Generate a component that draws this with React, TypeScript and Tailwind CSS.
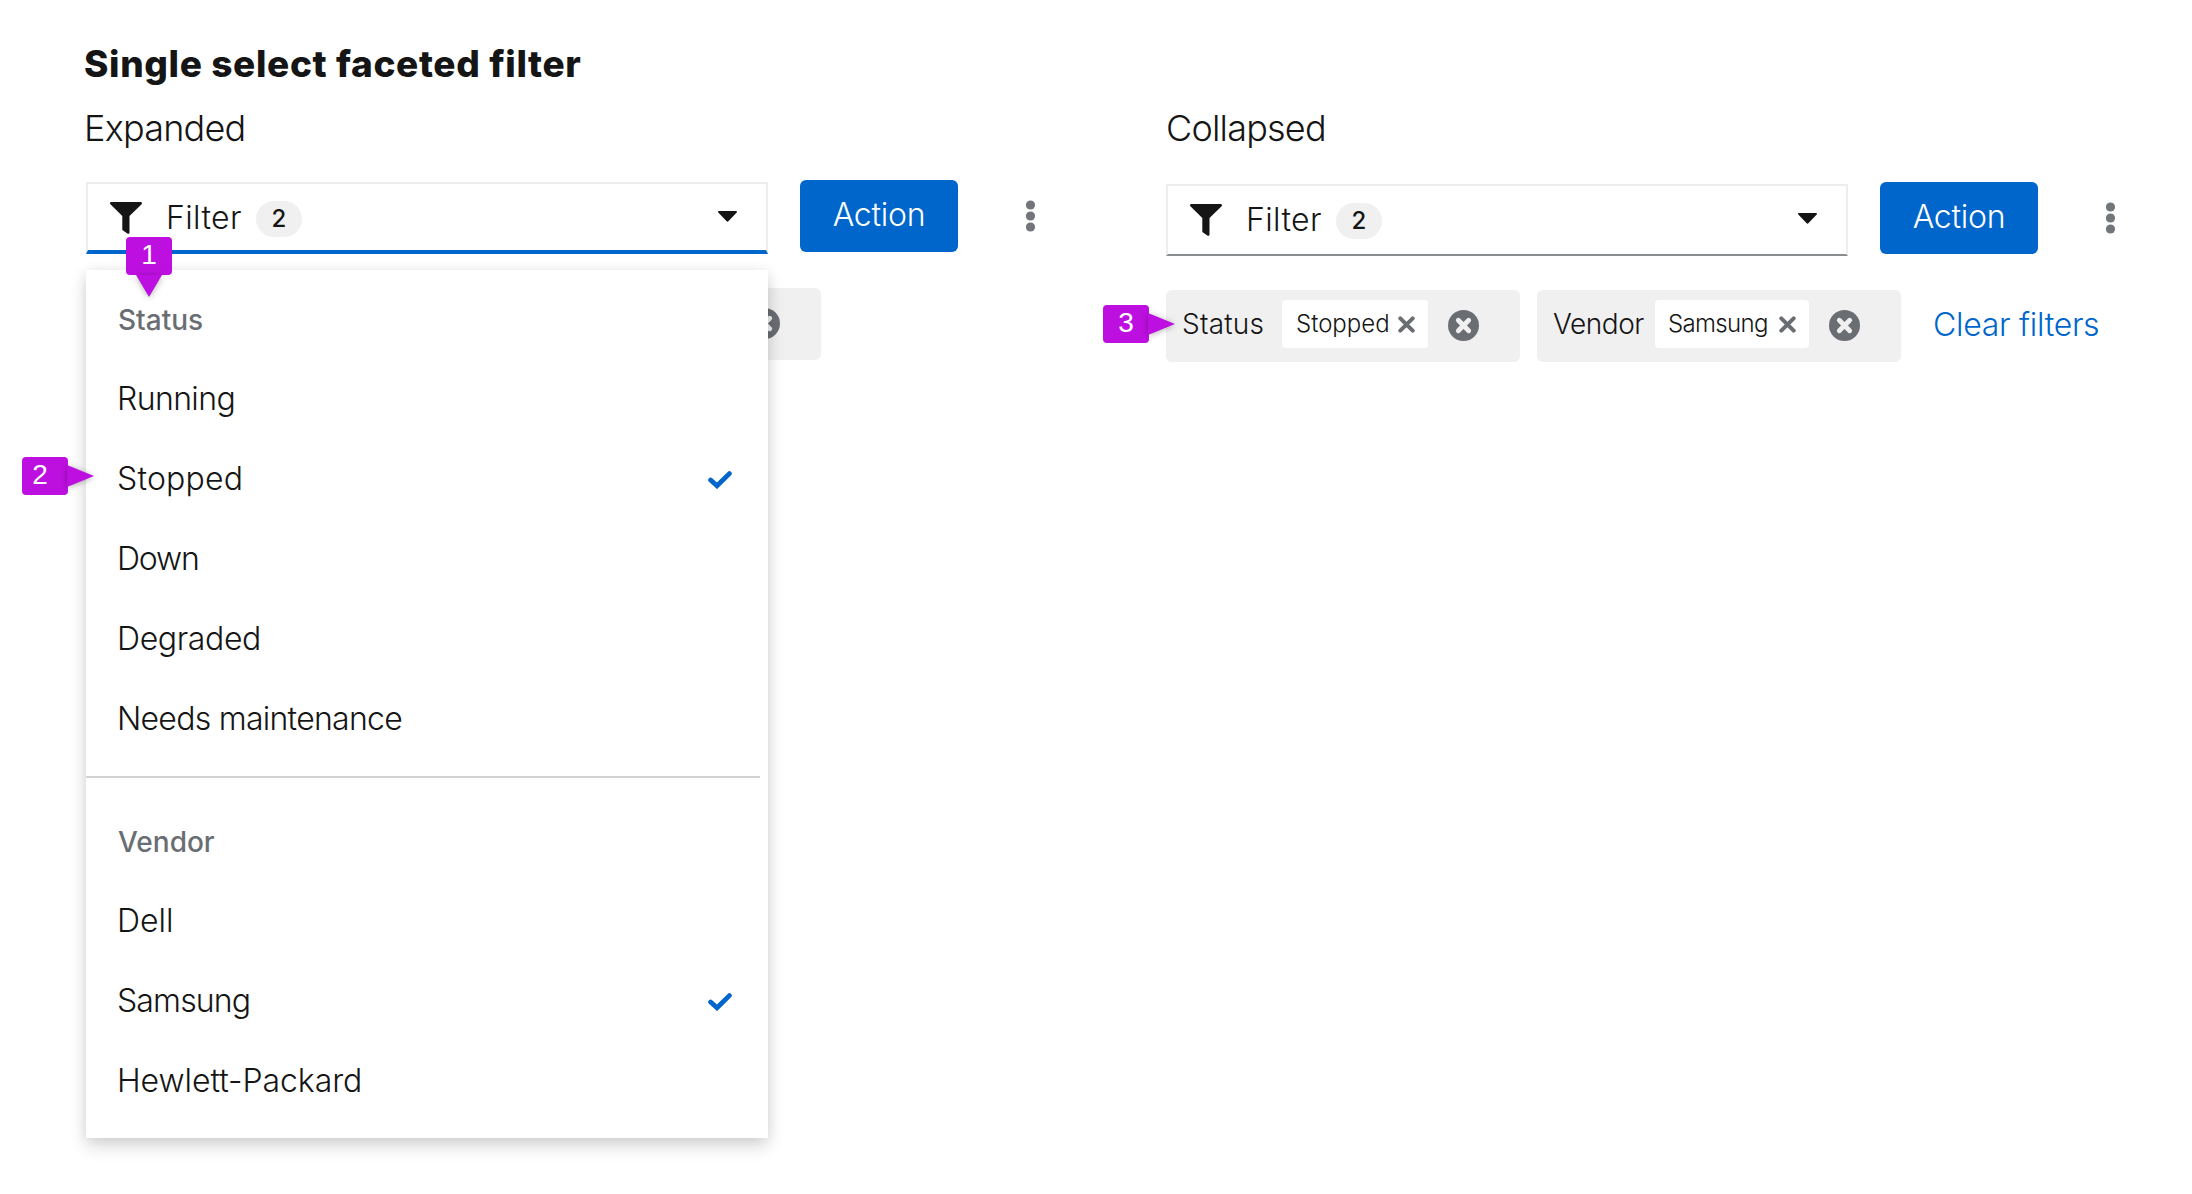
import React from "react";

const Funnel = () => (
  <svg className="h-8 w-8 shrink-0" viewBox="0 0 32 32" fill="#151515">
    <path d="M1.500 0h29c1.400 0 1.900 1.400 1.100 2.300L19.500 13.900V30.400c0 1.200-1.200 1.600-2.100 1L13 28.600a1.600 1.600 0 0 1-.7-1.300V13.900L.4 2.300C-.5 1.400 .1 0 1.500 0z" />
  </svg>
);
const Caret = () => (
  <svg className="h-[11px] w-[19px] shrink-0" viewBox="0 0 19 11" fill="#151515">
    <path d="M1 0h17c.9 0 1.300 1 .7 1.600L10.600 10.100a1.500 1.500 0 0 1-2.200 0L.3 1.600C-.3 1 .1 0 1 0z" />
  </svg>
);
const Kebab = () => (
  <svg className="h-8 w-[10px]" viewBox="0 0 10 32" fill="#72767b">
    <circle cx="4.5" cy="5" r="4.600" />
    <circle cx="4.5" cy="16" r="4.600" />
    <circle cx="4.5" cy="27" r="4.600" />
  </svg>
);
const Check = () => (
  <svg className="h-[18px] w-6" viewBox="0 0 24 18" fill="none" stroke="#06c" strokeWidth="4.800" strokeLinecap="round">
    <path d="M2.600 9L9 14.800L21.400 2.600" />
  </svg>
);
const Times = () => (
  <svg className="h-[17px] w-[17px] shrink-0" viewBox="0 0 17 17" fill="none" stroke="#6a6e73" strokeWidth="4" strokeLinecap="round">
    <path d="M2.300 2.300L14.700 14.700M14.700 2.300L2.300 14.700" />
  </svg>
);
const TimesCircle = () => (
  <svg className="h-[31px] w-[31px] shrink-0" viewBox="0 0 31 31">
    <circle cx="15.500" cy="15.500" r="15.500" fill="#6a6e73" />
    <path d="M10.300 10.300L20.700 20.700M20.700 10.300L10.300 20.700" stroke="#f0f0f0" strokeWidth="4.800" strokeLinecap="round" />
  </svg>
);

function Toolbar({ open }: { open?: boolean }) {
  return (
    <div className="flex">
      <button
        className={
          open
            ? "mt-0.5 flex h-[72px] w-[682px] items-center border-2 border-b-4 border-[#ededed] border-b-[#06c] pt-px pr-[29px] pl-[22px]"
            : "mt-0.5 flex h-[72px] w-[682px] items-center border-2 border-[#ededed] border-b-[#8a8d90] pr-[29px] pb-px pl-[22px]"
        }
      >
        <Funnel />
        <span className="ml-6 w-[90px] text-left text-[32px] leading-[40px] font-light tracking-[0.011em]">Filter</span>
        <span className="mt-0.5 flex h-9 w-[46px] items-center justify-center rounded-full bg-[#f0f0f0] text-2xl font-medium">2</span>
        <span className="mb-0.5 ml-auto">
          <Caret />
        </span>
      </button>
      <button className="ml-8 h-[72px] w-[158px] rounded-md bg-[#06c] pb-[3px] text-[32px] font-light tracking-[-0.008em] text-white">
        Action
      </button>
      <div className="ml-[68px] flex h-[72px] items-center">
        <Kebab />
      </div>
    </div>
  );
}

type Option = { label: string; tracking: string; selected?: boolean };

const statusOptions: Option[] = [
  { label: "Running", tracking: "tracking-[-0.019em]" },
  { label: "Stopped", tracking: "tracking-[0.006em]", selected: true },
  { label: "Down", tracking: "tracking-[-0.036em]" },
  { label: "Degraded", tracking: "tracking-[-0.012em]" },
  { label: "Needs maintenance", tracking: "tracking-[-0.023em]" },
];
const vendorOptions: Option[] = [
  { label: "Dell", tracking: "tracking-[0em]" },
  { label: "Samsung", tracking: "tracking-[-0.027em]", selected: true },
  { label: "Hewlett-Packard", tracking: "tracking-[-0.002em]" },
];

function Group({ title, options }: { title: string; options: Option[] }) {
  return (
    <div>
      <div className="h-20 pl-8 text-[28px] leading-[80px] font-medium text-[#6a6e73]">{title}</div>
      {options.map((o) => (
        <div key={o.label} className="flex h-20 items-center justify-between pr-9 pb-[3px] pl-[31px] text-[32px] font-light">
          <span className={o.tracking}>{o.label}</span>
          {o.selected && (
            <span className="pt-0.5">
              <Check />
            </span>
          )}
        </div>
      ))}
    </div>
  );
}

function Pointer({ n, className }: { n: string; className: string }) {
  return (
    <div className={className}>
      <div className="h-[38px] w-[46px] rounded bg-[#bd10e0] text-center font-['Liberation_Sans',sans-serif] text-[28px] leading-[36px] text-white">
        <span className={n === "2" ? "-ml-[10px]" : ""}>{n}</span>
      </div>
      {n === "1" ? (
        <svg className="mx-auto h-[22px] w-[26px] drop-shadow-[0_1px_3px_rgba(0,0,0,0.3)]" viewBox="0 0 26 22">
          <path d="M0 0H26L13 22z" fill="#bd10e0" />
        </svg>
      ) : (
        <svg className="-ml-px h-[22px] w-[27px] drop-shadow-[0_1px_3px_rgba(0,0,0,0.3)]" viewBox="0 0 27 22">
          <path d="M0 0V22L27 11z" fill="#bd10e0" />
        </svg>
      )}
    </div>
  );
}

export default function App() {
  return (
    <div className="relative h-[1194px] w-[2192px] overflow-hidden bg-white pt-[38px] pl-[86px] font-['Inter',sans-serif] text-[#151515]">
      <h1 className="-ml-0.5 h-[52px] text-[37px] leading-[52px] font-extrabold tracking-[0.017em] whitespace-nowrap">
        Single select faceted filter
      </h1>
      <div className="mt-[14px] flex">
        <section className="relative w-[1080px] shrink-0">
          <h2 className="mb-7 -ml-0.5 text-[36px] leading-[48px] font-light tracking-[-0.022em]">Expanded</h2>
          <Toolbar open />
          <div className="mt-[34px] ml-[371px] flex h-[72px] w-[364px] items-center justify-end rounded-md bg-[#f0f0f0] pr-[41px] pb-px">
            <TimesCircle />
          </div>
          <div className="absolute top-[166px] left-0 w-[682px] bg-white pt-[10px] pb-4 shadow-[0_8px_16px_rgba(3,3,3,0.16),0_0_12px_rgba(3,3,3,0.06)]">
            <Group title="Status" options={statusOptions} />
            <div className="mt-4 mr-2 mb-6 h-0.5 bg-[#d2d2d2]" />
            <Group title="Vendor" options={vendorOptions} />
          </div>
          <Pointer n="1" className="absolute top-[133px] left-10" />
          <Pointer n="2" className="absolute top-[353px] -left-16 flex items-center" />
        </section>

        <section className="relative w-[1026px] shrink-0">
          <h2 className="mb-[30px] text-[36px] leading-[48px] font-light tracking-[-0.022em]">Collapsed</h2>
          <Toolbar />
          <div className="mt-[34px] flex font-light">
            <div className="flex h-[72px] w-[354px] items-center rounded-md bg-[#f0f0f0] pb-px pl-4">
              <span className="w-[100px] pb-[3px] text-[28px] tracking-[0.008em]">Status</span>
              <span className="mb-[3px] flex h-12 w-[146px] items-center justify-between rounded bg-white pr-[13px] pl-3.5 text-2xl">
                Stopped
                <Times />
              </span>
              <span className="ml-5">
                <TimesCircle />
              </span>
            </div>
            <div className="ml-[17px] flex h-[72px] w-[364px] items-center rounded-md bg-[#f0f0f0] pb-px pl-4">
              <span className="w-[102px] pb-[3px] text-[28px] tracking-[-0.016em]">Vendor</span>
              <span className="mb-[3px] flex h-12 w-[154px] items-center justify-between rounded bg-white pr-[13px] pl-[13px] text-2xl tracking-[-0.027em]">
                Samsung
                <Times />
              </span>
              <span className="ml-5">
                <TimesCircle />
              </span>
            </div>
            <a className="ml-8 text-[32px] leading-[69px] tracking-[-0.009em] whitespace-nowrap text-[#06c]">Clear filters</a>
          </div>
          <Pointer n="3" className="absolute top-[201px] -left-[63px] flex items-center" />
        </section>
      </div>
    </div>
  );
}
